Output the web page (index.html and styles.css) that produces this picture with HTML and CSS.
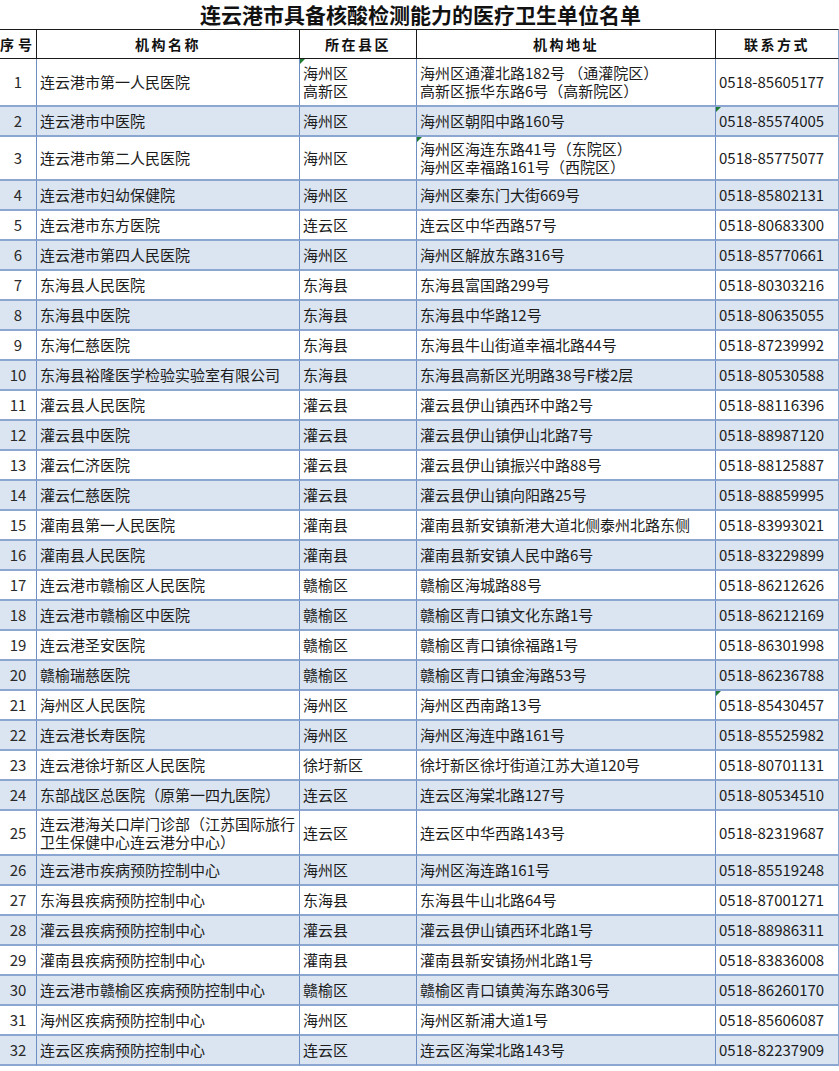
FILE: index.html
```html
<!DOCTYPE html>
<html lang="zh-CN">
<head>
<meta charset="utf-8">
<title>连云港市具备核酸检测能力的医疗卫生单位名单</title>
<link rel="stylesheet" href="styles.css">
</head>
<body>
<h1 class="title">连云港市具备核酸检测能力的医疗卫生单位名单</h1>
<table class="list">
  <colgroup>
    <col class="c-no"><col class="c-name"><col class="c-area"><col class="c-addr"><col class="c-tel">
  </colgroup>
  <thead>
    <tr class="head">
      <th class="h-no">序号</th><th>机构名称</th><th>所在县区</th><th>机构地址</th><th>联系方式</th>
    </tr>
  </thead>
  <tbody>
    <tr class="tall48"><td class="no">1</td><td>连云港市第一人民医院</td><td class="mk">海州区<br>高新区</td><td>海州区通灌北路182号 （通灌院区）<br>高新区振华东路6号（高新院区）</td><td class="tel">0518-85605177</td></tr>
    <tr class="alt"><td class="no">2</td><td>连云港市中医院</td><td>海州区</td><td>海州区朝阳中路160号</td><td class="tel mk">0518-85574005</td></tr>
    <tr class="tall44"><td class="no">3</td><td>连云港市第二人民医院</td><td>海州区</td><td class="mk">海州区海连东路41号（东院区）<br>海州区幸福路161号（西院区）</td><td class="tel">0518-85775077</td></tr>
    <tr class="alt"><td class="no">4</td><td>连云港市妇幼保健院</td><td>海州区</td><td>海州区秦东门大街669号</td><td class="tel">0518-85802131</td></tr>
    <tr><td class="no">5</td><td>连云港市东方医院</td><td>连云区</td><td>连云区中华西路57号</td><td class="tel">0518-80683300</td></tr>
    <tr class="alt"><td class="no">6</td><td>连云港市第四人民医院</td><td>海州区</td><td>海州区解放东路316号</td><td class="tel">0518-85770661</td></tr>
    <tr><td class="no">7</td><td>东海县人民医院</td><td>东海县</td><td>东海县富国路299号</td><td class="tel">0518-80303216</td></tr>
    <tr class="alt"><td class="no">8</td><td>东海县中医院</td><td>东海县</td><td>东海县中华路12号</td><td class="tel">0518-80635055</td></tr>
    <tr><td class="no">9</td><td>东海仁慈医院</td><td>东海县</td><td>东海县牛山街道幸福北路44号</td><td class="tel">0518-87239992</td></tr>
    <tr class="alt"><td class="no">10</td><td>东海县裕隆医学检验实验室有限公司</td><td>东海县</td><td>东海县高新区光明路38号F楼2层</td><td class="tel">0518-80530588</td></tr>
    <tr><td class="no">11</td><td>灌云县人民医院</td><td>灌云县</td><td>灌云县伊山镇西环中路2号</td><td class="tel">0518-88116396</td></tr>
    <tr class="alt"><td class="no">12</td><td>灌云县中医院</td><td>灌云县</td><td>灌云县伊山镇伊山北路7号</td><td class="tel">0518-88987120</td></tr>
    <tr><td class="no">13</td><td>灌云仁济医院</td><td>灌云县</td><td>灌云县伊山镇振兴中路88号</td><td class="tel">0518-88125887</td></tr>
    <tr class="alt"><td class="no">14</td><td>灌云仁慈医院</td><td>灌云县</td><td>灌云县伊山镇向阳路25号</td><td class="tel">0518-88859995</td></tr>
    <tr><td class="no">15</td><td>灌南县第一人民医院</td><td>灌南县</td><td>灌南县新安镇新港大道北侧泰州北路东侧</td><td class="tel">0518-83993021</td></tr>
    <tr class="alt"><td class="no">16</td><td>灌南县人民医院</td><td>灌南县</td><td>灌南县新安镇人民中路6号</td><td class="tel">0518-83229899</td></tr>
    <tr><td class="no">17</td><td>连云港市赣榆区人民医院</td><td>赣榆区</td><td>赣榆区海城路88号</td><td class="tel">0518-86212626</td></tr>
    <tr class="alt"><td class="no">18</td><td>连云港市赣榆区中医院</td><td>赣榆区</td><td>赣榆区青口镇文化东路1号</td><td class="tel">0518-86212169</td></tr>
    <tr><td class="no">19</td><td>连云港圣安医院</td><td>赣榆区</td><td>赣榆区青口镇徐福路1号</td><td class="tel">0518-86301998</td></tr>
    <tr class="alt"><td class="no">20</td><td>赣榆瑞慈医院</td><td>赣榆区</td><td>赣榆区青口镇金海路53号</td><td class="tel">0518-86236788</td></tr>
    <tr><td class="no">21</td><td>海州区人民医院</td><td>海州区</td><td>海州区西南路13号</td><td class="tel mk">0518-85430457</td></tr>
    <tr class="alt"><td class="no">22</td><td>连云港长寿医院</td><td>海州区</td><td>海州区海连中路161号</td><td class="tel">0518-85525982</td></tr>
    <tr><td class="no">23</td><td>连云港徐圩新区人民医院</td><td>徐圩新区</td><td>徐圩新区徐圩街道江苏大道120号</td><td class="tel">0518-80701131</td></tr>
    <tr class="alt"><td class="no">24</td><td>东部战区总医院（原第一四九医院）</td><td>连云区</td><td>连云区海棠北路127号</td><td class="tel">0518-80534510</td></tr>
    <tr class="tall45"><td class="no">25</td><td>连云港海关口岸门诊部（江苏国际旅行<br>卫生保健中心连云港分中心）</td><td>连云区</td><td>连云区中华西路143号</td><td class="tel">0518-82319687</td></tr>
    <tr class="alt"><td class="no">26</td><td>连云港市疾病预防控制中心</td><td>海州区</td><td>海州区海连路161号</td><td class="tel">0518-85519248</td></tr>
    <tr><td class="no">27</td><td>东海县疾病预防控制中心</td><td>东海县</td><td>东海县牛山北路64号</td><td class="tel">0518-87001271</td></tr>
    <tr class="alt"><td class="no">28</td><td>灌云县疾病预防控制中心</td><td>灌云县</td><td>灌云县伊山镇西环北路1号</td><td class="tel">0518-88986311</td></tr>
    <tr><td class="no">29</td><td>灌南县疾病预防控制中心</td><td>灌南县</td><td>灌南县新安镇扬州北路1号</td><td class="tel">0518-83836008</td></tr>
    <tr class="alt"><td class="no">30</td><td>连云港市赣榆区疾病预防控制中心</td><td>赣榆区</td><td>赣榆区青口镇黄海东路306号</td><td class="tel">0518-86260170</td></tr>
    <tr><td class="no">31</td><td>海州区疾病预防控制中心</td><td>海州区</td><td>海州区新浦大道1号</td><td class="tel">0518-85606087</td></tr>
    <tr class="alt"><td class="no">32</td><td>连云区疾病预防控制中心</td><td>连云区</td><td>连云区海棠北路143号</td><td class="tel">0518-82237909</td></tr>
  </tbody>
</table>
</body>
</html>
```
FILE: styles.css
```css
html, body {
  margin: 0;
  padding: 0;
  background: #ffffff;
}
body {
  width: 839px;
  font-family: "Noto Sans CJK SC", "Noto Sans", sans-serif;
  color: #1c1c1c;
}
.title {
  margin: 0;
  height: 29px;
  line-height: 29px;
  font-size: 21px;
  font-weight: 700;
  text-align: center;
  color: #111;
  padding-left: 2px;
}
.list {
  border-collapse: separate;
  border-spacing: 0;
  table-layout: fixed;
  width: 839px;
}
.c-no { width: 36px; }
.c-name { width: 263px; }
.c-area { width: 117px; }
.c-addr { width: 299px; }
.c-tel { width: 124px; }

.head th {
  box-sizing: border-box;
  height: 30px;
  padding: 0;
  font-size: 14px;
  font-weight: 700;
  letter-spacing: 2.5px;
  color: #111;
  text-align: center;
  vertical-align: middle;
  border-top: 1px solid #1a1a1a;
  border-bottom: 1px solid #1a1a1a;
  border-left: 1px solid #1a1a1a;
}
.head th:first-child { border-left: none; }
.head th:last-child { border-right: 1px solid #8fa8cc; }
.head .h-no { letter-spacing: 4px; }

.list td {
  box-sizing: border-box;
  height: 30px;
  padding: 0 0 0 3px;
  font-size: 15px;
  line-height: 18px;
  vertical-align: middle;
  white-space: nowrap;
  border-bottom: 2px solid #8ba7d1;
  border-left: 1px solid #6f8fc2;
  position: relative;
}
.list td:first-child { border-left: none; }
.list td:last-child { border-right: 1px solid #8fa8cc; }
.list td.no {
  text-align: center;
  padding: 0;
  color: #2a2a2a;
}
.list td.tel { letter-spacing: 0; }
.list tr.alt td { background: #dbe5f1; }
.list tr.tall48 td { height: 48px; }
.list tr.tall44 td { height: 44px; }
.list tr.tall45 td { height: 45px; }

.mk::before {
  content: "";
  position: absolute;
  left: 0;
  top: 0;
  width: 0;
  height: 0;
  border-top: 5px solid #1f7a32;
  border-right: 5px solid transparent;
}
```
